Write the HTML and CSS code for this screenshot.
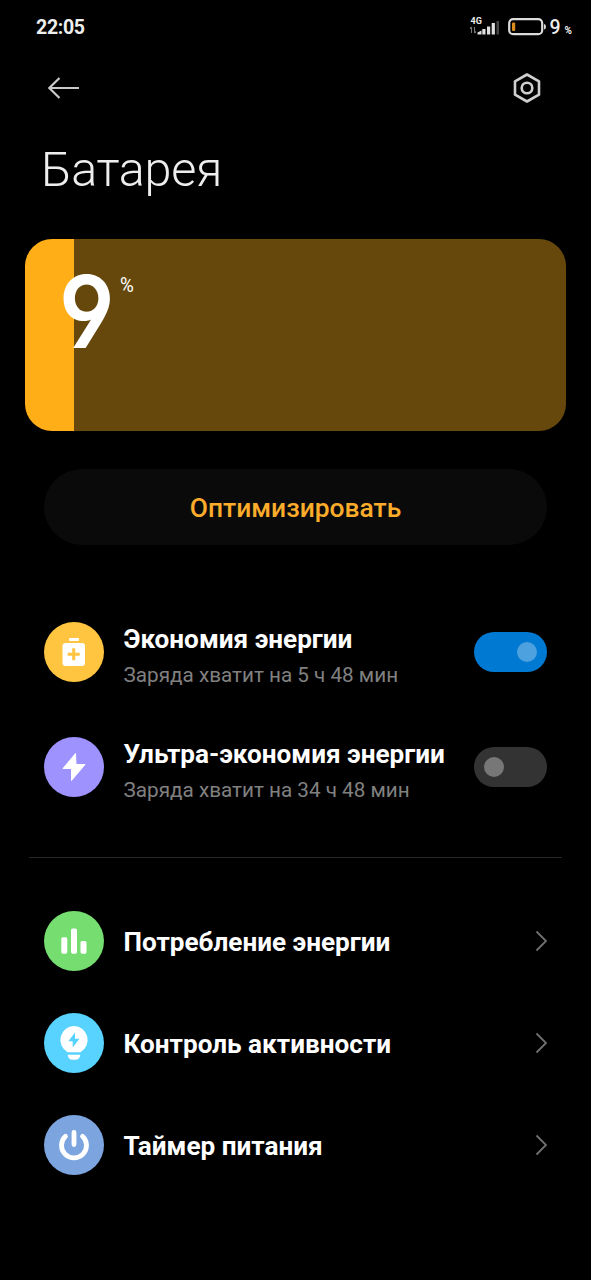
FILE: index.html
```html
<!DOCTYPE html>
<html lang="ru">
<head>
<meta charset="utf-8">
<title>Батарея</title>
<link rel="stylesheet" href="styles.css">
</head>
<body>
<div class="screen">
  <header class="status">
    <span class="clock">22:05</span>
    <div class="indicators">
      <div class="network">
        <span class="network-type">4G</span>
        <svg class="signal" width="32" height="14" viewBox="0 0 32 14">
          <path d="M2.500 6v6M1 7.500 2.500 6M5.500 6v6M7 10.500 5.500 12" fill="none" stroke="#777" stroke-width="1.100"/>
          <path d="M8.500 13.500V11.500l4-2v4zM13.300 8h3.200v5.500h-3.200zM18 5.500h3.200v8H18zM22.700 2h3.200v11.500h-3.200z" fill="#dedede"/>
          <path d="M27.500 0H30v13.500h-2.500z" fill="#444"/>
        </svg>
      </div>
      <svg class="battery" width="39" height="18" viewBox="0 0 39 18">
        <rect x="1.200" y="1.200" width="33" height="15" rx="4" fill="none" stroke="#dcdcdc" stroke-width="2.200"/>
        <rect x="4" y="4.500" width="3.200" height="8.500" rx="1" fill="#d98b1c"/>
        <path d="M36 6q2 .3 2 2.800T36 11.500z" fill="#dcdcdc"/>
      </svg>
      <span class="level">9</span><span class="level-unit">%</span>
    </div>
  </header>

  <nav class="toolbar">
    <svg width="34" height="24" viewBox="0 0 34 24" fill="none" stroke="#c9c9c9" stroke-width="2.200"><path d="M32 12H2M12.500 2 2.300 12l10.200 10"/></svg>
    <svg width="30" height="32" viewBox="0 0 30 32" fill="none" stroke="#cfcfcf" stroke-width="2.600" stroke-linejoin="round"><path d="M15 2.500 27 9.300v13.400L15 29.500 3 22.700V9.300z"/><circle cx="15" cy="16" r="5.300"/></svg>
  </nav>

  <h1 class="title">Батарея</h1>

  <section class="charge">
    <span class="charge-value">9</span><span class="charge-unit">%</span>
  </section>

  <button class="optimize">Оптимизировать</button>

  <ul class="modes">
    <li class="row">
      <span class="icon saver"><svg width="60" height="60" viewBox="0 0 60 60"><rect x="25" y="16" width="10" height="3" rx="1" fill="#fff"/><rect x="18.500" y="21" width="22.500" height="23" rx="3" fill="#fff"/><path d="M29.700 26.300v12M23.700 32.300h12" stroke="#ffc440" stroke-width="3"/></svg></span>
      <div class="text"><span class="label">Экономия энергии</span><span class="hint">Заряда хватит на 5 ч 48 мин</span></div>
      <span class="switch on"></span>
    </li>
    <li class="row">
      <span class="icon ultra"><svg width="60" height="60" viewBox="0 0 60 60"><path d="M31.500 16.500 19 31.500h8.500V43.500L41 27.500h-9z" fill="#fff" stroke="#fff" stroke-linejoin="round"/></svg></span>
      <div class="text"><span class="label">Ультра-экономия энергии</span><span class="hint">Заряда хватит на 34 ч 48 мин</span></div>
      <span class="switch"></span>
    </li>
  </ul>

  <hr class="divider">

  <ul class="links">
    <li class="row">
      <span class="icon usage"><svg width="60" height="60" viewBox="0 0 60 60" fill="#fff"><rect x="17.300" y="26.300" width="6" height="16.500" rx="1.700"/><rect x="27" y="17.500" width="6" height="25.300" rx="1.700"/><rect x="36.500" y="30" width="6" height="12.800" rx="1.700"/></svg></span>
      <span class="label">Потребление энергии</span>
      <svg class="chevron" width="14" height="22" viewBox="0 0 14 22"><path d="M2.500 1.500 12 11 2.500 20.500"/></svg>
    </li>
    <li class="row">
      <span class="icon activity"><svg width="60" height="60" viewBox="0 0 60 60"><path d="M30 13a14 14 0 0 1 6.500 26.200h-13A14 14 0 0 1 30 13z" fill="#fff"/><path d="M23.700 41.800h12.600q-.5 5-5 5h-2.600q-4.500 0-5-5z" fill="#fff"/><path d="M31 19.500 24.300 28.300h4.400V34.500L35.500 25.800H31z" fill="#58d2ff"/></svg></span>
      <span class="label">Контроль активности</span>
      <svg class="chevron" width="14" height="22" viewBox="0 0 14 22"><path d="M2.500 1.500 12 11 2.500 20.500"/></svg>
    </li>
    <li class="row">
      <span class="icon timer"><svg width="60" height="60" viewBox="0 0 60 60" fill="none" stroke="#fff" stroke-width="4.800" stroke-linecap="round"><path d="M21.500 21.300a12.500 12.500 0 1 0 17 0M30 17.300v12.200"/></svg></span>
      <span class="label">Таймер питания</span>
      <svg class="chevron" width="14" height="22" viewBox="0 0 14 22"><path d="M2.500 1.500 12 11 2.500 20.500"/></svg>
    </li>
  </ul>
</div>
</body>
</html>
```
FILE: styles.css
```css
* { box-sizing: border-box; }
body { margin: 0; background: #000; color: #fff; font-family: Roboto, "Noto Sans", sans-serif; }
ul { list-style: none; margin: 0; padding: 0; }
.screen { width: 591px; height: 1280px; overflow: hidden; display: flex; flex-direction: column; }

.status { height: 54px; padding: 0 19px 0 36px; display: flex; align-items: center; justify-content: space-between; color: #eee; }
.clock { font-size: 19.500px; font-weight: 700; line-height: 24px; letter-spacing: -0.300px; padding-top: 2px; }
.indicators { display: flex; align-items: center; }
.network { display: flex; flex-direction: column; width: 32px; height: 20px; margin-right: 7px; }
.network-type { font-size: 9px; line-height: 9px; font-weight: 700; padding-left: 2px; height: 6px; }
.signal { display: block; margin-top: -2px; }
.battery { margin-right: 3px; }
.level { font-size: 19.500px; font-weight: 500; line-height: 24px; width: 12px; padding-top: 2px; }
.level-unit { font-size: 10px; font-weight: 700; padding: 6px 0 0 3px; }

.toolbar { height: 66px; padding: 2px 49px 0 47px; display: flex; align-items: center; justify-content: space-between; }

.title { margin: 20px 0 0 41px; height: 60px; font-size: 48.500px; line-height: 60px; font-weight: 300; letter-spacing: -0.300px; color: #eee; }

.charge { height: 192px; margin: 39px 25px 0; padding: 35px 0 0 34px; border-radius: 27px; display: flex; align-items: flex-start; background: linear-gradient(to right, #ffae17 49px, #66480d 49px); }
.charge-value { font-family: Inter, sans-serif; font-feature-settings: "cv04"; font-size: 101px; line-height: 74px; font-weight: 600; width: 61px; transform: scaleX(0.910); transform-origin: left; }
.charge-unit { font-size: 20px; line-height: 22px; transform: scaleX(0.940); transform-origin: left; }

.optimize { height: 76px; margin: 38px 44px 0; padding: 2px 0 0; border: 0; border-radius: 38px; background: #0a0a0a; color: #fbac2a; font-family: inherit; font-size: 26.400px; font-weight: 500; }

.modes { margin-top: 77px; padding: 0 44px; display: flex; flex-direction: column; gap: 55px; }
.row { height: 60px; display: flex; align-items: center; }
.icon { width: 60px; height: 60px; border-radius: 50%; margin-right: 19.500px; flex: none; }
.icon svg { display: block; }
.saver { background: #ffc440; }
.ultra { background: #9e92ff; }
.usage { background: #76de70; }
.activity { background: #58d2ff; }
.timer { background: #7ca5e0; }
.text { flex: 1; display: flex; flex-direction: column; gap: 6px; padding-top: 8px; white-space: nowrap; }
.label { flex: 1; font-size: 26.150px; line-height: 32px; font-weight: 700; white-space: nowrap; }
.links .label { padding-top: 2px; }
.hint { font-size: 20.700px; line-height: 28px; color: #808080; }
.switch { width: 73px; height: 40px; padding: 10px; border-radius: 20px; background: #333; display: flex; flex: none; }
.switch::before { content: ""; width: 20px; height: 20px; border-radius: 50%; background: #777; }
.switch.on { background: #0079d2; justify-content: flex-end; }
.switch.on::before { background: #4da1df; }

.divider { width: 533px; height: 1px; margin: 60px 0 0 29px; border: 0; background: #272727; }

.links { margin-top: 53px; padding: 0 43px 0 44px; display: flex; flex-direction: column; gap: 42px; }
.chevron { fill: none; stroke: #707070; stroke-width: 1.800; }
```
